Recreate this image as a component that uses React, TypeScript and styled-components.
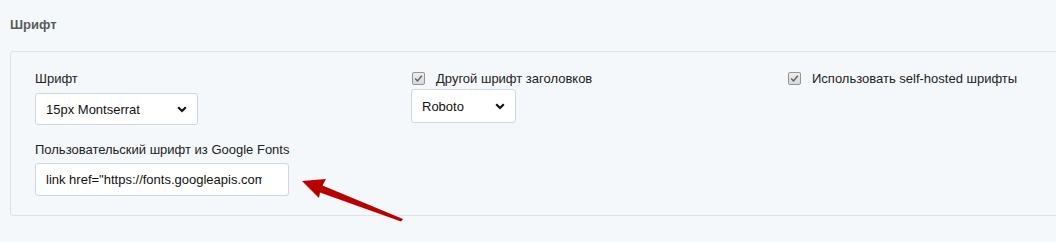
import React from 'react';
import styled, { createGlobalStyle } from 'styled-components';

const GlobalStyle = createGlobalStyle`
  html, body {
    margin: 0;
    padding: 0;
    background: #f5f8fa;
    font-family: "Liberation Sans", Arial, sans-serif;
    font-size: 13px;
    color: #222;
  }
`;

const Page = styled.div`
  position: relative;
  width: 1056px;
  height: 242px;
  overflow: hidden;
  padding: 17px 0 0 10px;
  box-sizing: border-box;
`;

const Heading = styled.h3`
  margin: 0 0 18px 0;
  font-size: 13px;
  line-height: 16px;
  font-weight: bold;
  color: #555b60;
`;

const Panel = styled.div`
  width: 1060px;
  box-sizing: border-box;
  border: 1px solid #dde3e8;
  border-radius: 3px;
  background: #f5f8fa;
  padding: 19px 0 19px 24px;
`;

const Grid = styled.div`
  display: grid;
  grid-template-columns: 376px 376px 300px;
  row-gap: 17px;
`;

const Field = styled.div`
  display: flex;
  flex-direction: column;
  align-items: flex-start;
`;

const Label = styled.label<{ gap?: number }>`
  display: block;
  line-height: 15px;
  margin-bottom: ${p => p.gap ?? 7}px;
  color: #222;
`;

const CheckRow = styled.label`
  display: flex;
  align-items: center;
  gap: 11px;
  line-height: 15px;
  margin-bottom: 3px;
  padding-left: 1px;
`;

const Box = styled.span`
  width: 11px;
  height: 11px;
  border: 1px solid #959595;
  border-radius: 2px;
  background: linear-gradient(#eeeeee, #d8d8d8);
  display: flex;
  align-items: center;
  justify-content: center;
`;

const SelectWrap = styled.div<{ width: number; height: number }>`
  position: relative;
  width: ${p => p.width}px;
  height: ${p => p.height}px;
  box-sizing: border-box;
  border: 1px solid #cfd6dc;
  border-radius: 3px;
  background: #fff;
  display: flex;
  align-items: center;
  padding: 0 10px;
`;

const SelectText = styled.span`
  flex: 1;
  font-size: 13px;
  color: #111;
`;

const TextInput = styled.input`
  width: 254px;
  height: 33px;
  box-sizing: border-box;
  border: 1px solid #cfd6dc;
  border-radius: 3px;
  background: #fff;
  padding: 0 26px 0 10px;
  font-family: "Liberation Sans", Arial, sans-serif;
  font-size: 13px;
  color: #111;
  outline: none;
`;

const Arrow = styled.svg`
  position: absolute;
  left: 0;
  top: 0;
  pointer-events: none;
`;

const Check = () => (
  <Box>
    <svg width="9" height="9" viewBox="0 0 9 9">
      <path d="M1.2 4.6 L3.5 6.9 L7.8 1.8" fill="none" stroke="#5f5f5f" strokeWidth="1.4" />
    </svg>
  </Box>
);

const Chevron = () => (
  <svg width="10" height="7" viewBox="0 0 10 7">
    <path d="M1.2 1.3 L5 5 L8.8 1.3" fill="none" stroke="#111" strokeWidth="2.2" />
  </svg>
);

const Select: React.FC<{ value: string; width: number; height: number }> = ({ value, width, height }) => (
  <SelectWrap width={width} height={height}>
    <SelectText>{value}</SelectText>
    <Chevron />
  </SelectWrap>
);

export default function App() {
  return (
    <>
      <GlobalStyle />
      <Page>
        <Heading>Шрифт</Heading>
        <Panel>
          <Grid>
            <Field>
              <Label>Шрифт</Label>
              <Select value="15px Montserrat" width={163} height={32} />
            </Field>
            <Field>
              <CheckRow>
                <Check />
                Другой шрифт заголовков
              </CheckRow>
              <Select value="Roboto" width={105} height={34} />
            </Field>
            <Field>
              <CheckRow>
                <Check />
                Использовать self-hosted шрифты
              </CheckRow>
            </Field>
            <Field>
              <Label gap={6}>Пользовательский шрифт из Google Fonts</Label>
              <TextInput readOnly value={'link href="https://fonts.googleapis.com/css2?family=Montserrat'} />
            </Field>
          </Grid>
        </Panel>
        <Arrow width="1056" height="242" viewBox="0 0 1056 242">
          <polygon
            points="302,181 326,179 322.5,185.5 403,219 401,221.5 320,192.5 319,198"
            fill="#b80000"
          />
        </Arrow>
      </Page>
    </>
  );
}
